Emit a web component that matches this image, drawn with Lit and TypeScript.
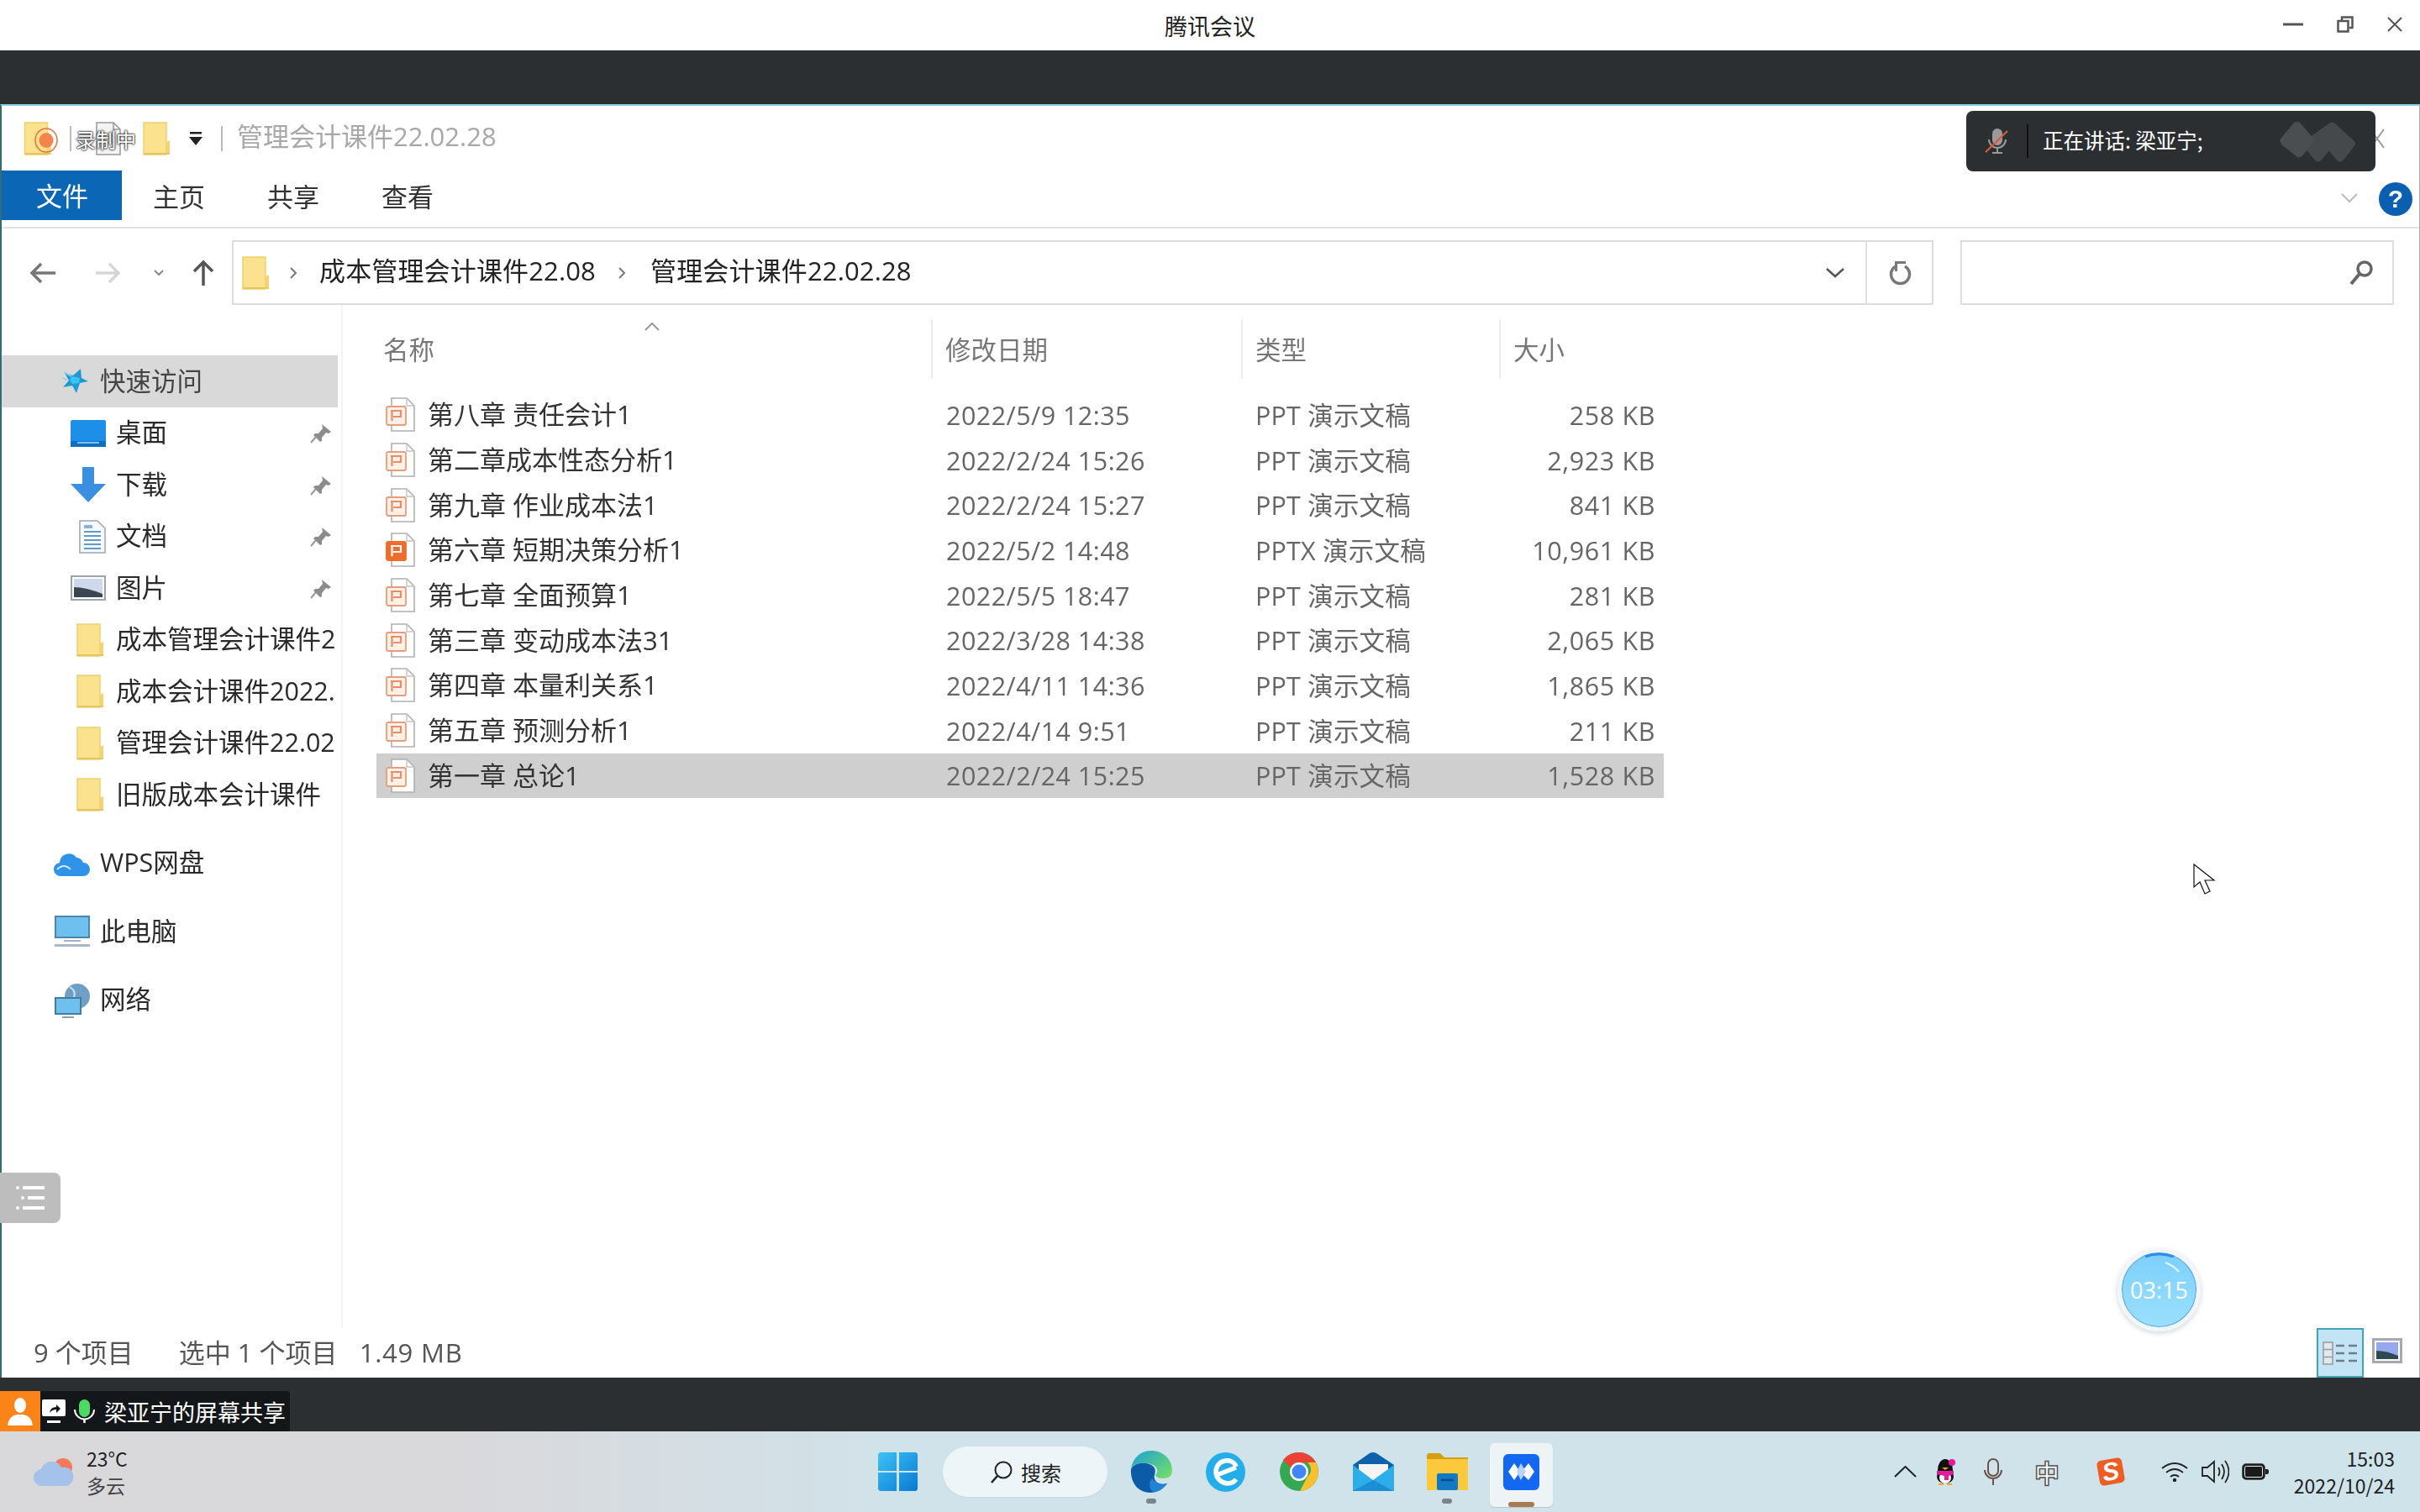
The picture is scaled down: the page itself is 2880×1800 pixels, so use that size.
import { LitElement, html, css, svg, TemplateResult } from 'lit';
import { customElement } from 'lit/decorators.js';

interface FileRow {
  name: string;
  date: string;
  type: string;
  size: string;
  solid?: boolean;
  selected?: boolean;
}

const FILES: FileRow[] = [
  { name: '第八章 责任会计1', date: '2022/5/9 12:35', type: 'PPT 演示文稿', size: '258 KB' },
  { name: '第二章成本性态分析1', date: '2022/2/24 15:26', type: 'PPT 演示文稿', size: '2,923 KB' },
  { name: '第九章 作业成本法1', date: '2022/2/24 15:27', type: 'PPT 演示文稿', size: '841 KB' },
  { name: '第六章 短期决策分析1', date: '2022/5/2 14:48', type: 'PPTX 演示文稿', size: '10,961 KB', solid: true },
  { name: '第七章 全面预算1', date: '2022/5/5 18:47', type: 'PPT 演示文稿', size: '281 KB' },
  { name: '第三章 变动成本法31', date: '2022/3/28 14:38', type: 'PPT 演示文稿', size: '2,065 KB' },
  { name: '第四章 本量利关系1', date: '2022/4/11 14:36', type: 'PPT 演示文稿', size: '1,865 KB' },
  { name: '第五章 预测分析1', date: '2022/4/14 9:51', type: 'PPT 演示文稿', size: '211 KB' },
  { name: '第一章 总论1', date: '2022/2/24 15:25', type: 'PPT 演示文稿', size: '1,528 KB', selected: true },
];

const folderIcon = (w = 33, h = 40): TemplateResult => html`
  <svg width=${w} height=${h} viewBox="0 0 33 40">
    <path d="M1 1h27v38H1z" fill="#fbe28e" stroke="#efd070" stroke-width="1.5" />
    <path d="M28 24l4-2v17h-4z" fill="#f4d470" />
    <path d="M1 37h31v2H1z" fill="#e6c560" />
  </svg>
`;

const pinIcon = html`
  <svg width="28" height="26" viewBox="0 0 28 26">
    <path d="M15 2l11 9-3 2-3-1-5 6 0 4-2 1-8-8 2-2 4 0 5-6z" fill="#8c8c8c" />
    <path d="M8 17l-6 7" stroke="#999" stroke-width="2" />
  </svg>
`;

const pptIcon = (solid = false): TemplateResult => html`
  <svg width="36" height="41" viewBox="0 0 36 41">
    <path d="M7 1h18l9 9v30H7z" fill="#fff" stroke="#b0b0b0" stroke-width="1.6" />
    <path d="M25 1v9h9" fill="none" stroke="#c4c4c4" stroke-width="1.4" />
    <rect x="1" y="11" width="23" height="22" rx="2" fill=${solid ? '#ee6c2c' : '#fdf0e6'} stroke=${solid ? '#ee6c2c' : '#e99c7c'} stroke-width="1.8" />
    <path d="M6 16h12v7H9M7.500 16v12" fill="none" stroke=${solid ? '#fff' : '#e58e68'} stroke-width="2.200" />
  </svg>
`;

const chevron = (w = 10, h = 16, color = '#777'): TemplateResult => html`
  <svg width=${w} height=${h} viewBox="0 0 10 16"><path d="M2 2l6 6-6 6" fill="none" stroke=${color} stroke-width="2" /></svg>
`;

const meetLogo = (fill: string): TemplateResult => svg`
  <path d="M20 1q3-2 6 0l15 20-12 17q-3 4-6 2L8 26q-3-4-1-7z" fill=${fill} />
  <path d="M55 2q3-3 6 0l19 20q2 3 0 6L69 44q-3 3-6 0l-8-11-8 11q-3 3-6 0L30 28q-2-3 0-6z" fill=${fill} opacity=".85" />
`;

@customElement('app-root')
export class AppRoot extends LitElement {
  static styles = css`
    :host {
      display: block;
      position: relative;
      width: 2880px;
      height: 1800px;
      overflow: hidden;
      background: #fff;
      font-family: "Open Sans", "Noto Sans CJK SC", sans-serif;
      color: #333;
    }
    svg { display: block; flex: none; }

    .titlebar {
      height: 60px;
      background: #fff;
      display: flex;
      align-items: center;
      justify-content: center;
      position: relative;
      font-size: 27px;
      color: #222;
    }
    .win-btns {
      position: absolute;
      right: 21px;
      top: 19px;
      display: flex;
      align-items: center;
      gap: 40px;
    }
    .stripe { height: 64px; background: #2c2f32; }
    .stripe.low { height: 64px; position: relative; }

    .window {
      height: 1516px;
      box-sizing: border-box;
      background: #fff;
      border-top: 2px solid #86d2dc;
      border-left: 2px solid #2f6e78;
      border-right: 1px solid #aaa;
      display: flex;
      flex-direction: column;
      font-size: 30.5px;
      line-height: 40px;
      filter: blur(0.55px);
    }

    .qat {
      height: 77px;
      flex: none;
      display: flex;
      align-items: center;
      padding-left: 26px;
      box-sizing: border-box;
    }
    .qat .sep { width: 2px; height: 30px; background: #bbb; margin-left: 21px; }
    .qat .doc { margin-left: 29px; }
    .qat .f2 { margin-left: 26px; }
    .qat .arrow { margin-left: 21px; }
    .qat .title { margin-left: 17px; color: #a8a8a8; font-size: 31px; padding-bottom: 5px; }
    .qat .close { margin-left: auto; margin-right: 40px; }

    .tabs {
      height: 69px;
      flex: none;
      box-sizing: border-box;
      border-bottom: 2px solid #e2e2e2;
      display: flex;
      align-items: flex-start;
    }
    .tab { height: 59px; padding: 2px 37px 0; box-sizing: border-box; display: flex; align-items: center; color: #333; font-size: 31px; }
    .tab.file { background: #0b66b6; color: #fff; padding: 0 40px 0 41px; }
    .tabs .more { margin-left: auto; margin-right: 24px; margin-top: 26px; }
    .help {
      width: 40px;
      height: 40px;
      margin: 14px 8px 0 0;
      border-radius: 50%;
      background: #0b5fb0;
      color: #fff;
      font: bold 30px/40px "Liberation Sans", sans-serif;
      text-align: center;
    }

    .nav {
      flex: none;
      display: flex;
      align-items: center;
      padding: 14px 30px 0 33px;
      height: 91px;
      box-sizing: border-box;
    }
    .nav .fwd { margin-left: 46px; }
    .nav .drop { margin-left: 40px; }
    .nav .up { margin-left: 33px; }
    .addr {
      margin-left: 20px;
      width: 2025px;
      height: 77px;
      box-sizing: border-box;
      border: 2px solid #dcdcdc;
      display: flex;
      align-items: center;
      padding-left: 10px;
      color: #222;
      font-size: 31px;
    }
    .addr .crumb1 { margin-left: 23px; }
    .addr .t1 { margin-left: 26px; padding-bottom: 5px; letter-spacing: .15px; }
    .addr .crumb2 { margin-left: 26px; }
    .addr .t2 { margin-left: 29px; padding-bottom: 5px; letter-spacing: .15px; }
    .addr .dd { margin-left: auto; }
    .addr .refresh {
      margin-left: 24px;
      width: 77px;
      height: 75px;
      border-left: 2px solid #e0e0e0;
      display: flex;
      align-items: center;
      justify-content: center;
    }
    .search {
      margin-left: 32px;
      width: 516px;
      height: 77px;
      box-sizing: border-box;
      border: 2px solid #dcdcdc;
      display: flex;
      align-items: center;
      justify-content: flex-end;
      padding-right: 22px;
    }

    .content { flex: 1; display: flex; min-height: 0; }
    .side {
      width: 406px;
      flex: none;
      box-sizing: border-box;
      padding-top: 60px;
      border-right: 2px solid #f3f3f3;
    }
    .side-row {
      height: 61.5px;
      width: 400px;
      display: flex;
      align-items: center;
      position: relative;
      white-space: nowrap;
      color: #2a2a2a;
    }
    .side-row span { padding-bottom: 3px; }
    .side-row.quick { height: 62px; background: #d9d9d9; color: #444; }
    .side-row .ico { width: 136px; flex: none; display: flex; justify-content: flex-end; padding-right: 12px; box-sizing: border-box; }
    .side-row .ico.fold { padding-right: 14px; }
    .side-row .pin { position: absolute; right: 6px; top: 18px; }
    .side-row.top { height: 81.5px; }
    .side-row.top .ico, .side-row.quick .ico { width: 117px; }
    .side-row.quick .ico { padding-right: 14px; }
    .side-gap { height: 10px; }

    .list { flex: 1; padding-left: 40px; padding-top: 17px; }
    .cols {
      width: 1532px;
      display: grid;
      grid-template-columns: 660px 369px 307px 196px;
      align-items: center;
    }
    .head { height: 71px; color: #777; position: relative; align-items: stretch; }
    .head > div {
      padding-left: 15px;
      display: flex;
      align-items: center;
      border-left: 2px solid #ededed;
    }
    .head > div:first-child { border-left: none; padding-left: 8px; }
    .sort { position: absolute; left: 318px; top: 3px; }
    .rows { margin-top: 16px; }
    .row { height: 53.7px; color: #666; white-space: nowrap; }
    .row.sel { background: #cfcfcf; }
    .row .name { display: flex; align-items: center; gap: 14px; padding-left: 11px; color: #333; font-size: 31px; }
    .row .name span { padding-bottom: 1px; }
    .row .date { padding-left: 18px; letter-spacing: .45px; }
    .row .type { padding-left: 17px; letter-spacing: .2px; }
    .row .size { text-align: right; padding-right: 10px; letter-spacing: .6px; }

    .status {
      height: 60px;
      flex: none;
      display: flex;
      align-items: center;
      padding-left: 38px;
      color: #555;
      position: relative;
      font-size: 31px;
    }
    .status .sel { margin-left: 54px; }
    .status .bytes { margin-left: 26px; letter-spacing: .8px; }
    .views { position: absolute; right: 20px; bottom: 0; display: flex; align-items: flex-start; gap: 10px; }
    .view-d {
      width: 56px;
      height: 59px;
      box-sizing: border-box;
      background: #c2e4f4;
      border: 2px solid #3ea6b6;
      display: flex;
      align-items: center;
      justify-content: center;
    }
    .view-t { margin-top: 12px; }

    .share {
      position: absolute;
      left: 0;
      top: 16px;
      height: 48px;
      width: 345px;
      background: #14171a;
      border-radius: 0 4px 0 0;
      display: flex;
      align-items: center;
      color: #fff;
      font-size: 27px;
      font-family: "Noto Sans CJK SC", sans-serif;
    }
    .share .who { width: 48px; height: 48px; background: #fb8419; display: flex; align-items: center; justify-content: center; }
    .share .scr { margin-left: 2px; }
    .share .mic { margin-left: 10px; }
    .share .label { margin-left: 11px; white-space: nowrap; }

    .taskbar {
      height: 96px;
      display: flex;
      align-items: center;
      background: linear-gradient(90deg, #d9d9dc 0, #d9d9dc 560px, #d0e3ea 1100px, #cfe3ea 100%);
      padding-right: 30px;
      color: #222;
      font-family: "Noto Sans CJK SC", sans-serif;
    }
    .weather { width: 1024px; flex: none; display: flex; align-items: center; padding-left: 40px; box-sizing: border-box; gap: 15px; }
    .weather .txt { font-size: 23px; line-height: 32px; }
    .weather .txt div:last-child { color: #444; }
    .cell { width: 88px; height: 96px; flex: none; display: flex; align-items: center; justify-content: center; position: relative; }
    .pill {
      width: 196px;
      height: 60px;
      margin: 0 8px 0 10px;
      flex: none;
      border-radius: 30px;
      background: #edf5f8;
      box-shadow: 0 1px 1px #c8d6dc;
      display: flex;
      align-items: center;
      gap: 10px;
      padding-left: 56px;
      box-sizing: border-box;
      font-size: 24px;
    }
    .dot { position: absolute; left: 38px; top: 80px; width: 12px; height: 6px; border-radius: 3px; background: #7b8489; }
    .tile {
      width: 75px;
      height: 76px;
      position: relative;
      background: #eef3f6;
      border-radius: 6px;
      box-shadow: 0 1px 1px #b9c7cd;
      display: flex;
      align-items: center;
      justify-content: center;
      margin-top: 8px;
      padding-bottom: 8px;
      box-sizing: border-box;
    }
    .tile .bar { position: absolute; left: 22px; bottom: 0; width: 31px; height: 6px; border-radius: 3px; background: #a87a52; }
    .tray {
      margin-left: auto;
      display: grid;
      grid-template-columns: 48px 48px 66px 62px 90px 62px 34px 62px 135px;
      align-items: center;
      justify-items: center;
    }
    .ime {
      font-size: 30px;
      line-height: 32px;
      color: #fff;
      -webkit-text-stroke: 1.5px #555;
      font-weight: 700;
    }
    .sogou {
      width: 30px;
      height: 30px;
      background: #ee5d22;
      border-radius: 5px;
      transform: rotate(-10deg);
      color: #fff;
      font: italic bold 30px/30px "Liberation Sans", sans-serif;
      text-align: center;
    }
    .clock { justify-self: end; text-align: right; font-size: 23px; line-height: 32px; }

    .rec { position: absolute; left: 41px; top: 152px; }
    .rec-label {
      position: absolute;
      left: 90px;
      top: 149px;
      color: #fff;
      font-size: 24px;
      line-height: 34px;
      font-family: "Noto Sans CJK SC", sans-serif;
      text-shadow: 0 0 2px #222, 0 0 2px #222, 0 0 3px #444;
    }
    .float-list {
      position: absolute;
      left: 0;
      top: 1396px;
      width: 72px;
      height: 60px;
      background: #bdbdbd;
      border-radius: 0 8px 8px 0;
      display: flex;
      align-items: center;
      justify-content: center;
    }
    .toast {
      position: absolute;
      left: 2340px;
      top: 132px;
      width: 487px;
      height: 72px;
      box-sizing: border-box;
      border-radius: 8px;
      background: #2c2f32;
      color: #fff;
      font-family: "Noto Sans CJK SC", sans-serif;
      font-size: 24.5px;
      display: flex;
      align-items: center;
      padding-left: 22px;
    }
    .toast .div { width: 2px; height: 40px; background: #111; margin-left: 22px; }
    .toast .msg { margin-left: 17px; white-space: nowrap; padding-bottom: 3px; }
    .toast .logo { position: absolute; left: 372px; top: 13px; }
    .cursor { position: absolute; left: 2610px; top: 1028px; }
    .timer {
      position: absolute;
      left: 2520px;
      top: 1486px;
      width: 99px;
      height: 99px;
      box-sizing: border-box;
      border: 5px solid #f2f6f8;
      border-radius: 50%;
      background: linear-gradient(180deg, #7dd0fb, #9be0fd);
      box-shadow: 0 2px 6px #ccd6da, inset 0 0 0 1px #4c9fe8;
      color: #fff;
      font-size: 27px;
      display: flex;
      align-items: center;
      justify-content: center;
    }
    .timer .shine { position: absolute; left: 0; top: 0; }
  `;

  private renderSideRow(label: string, icon: TemplateResult, pinned = false, cls = '', fold = false): TemplateResult {
    return html`
      <div class="side-row ${cls}">
        <div class="ico ${fold ? 'fold' : ''}">${icon}</div>
        <span>${label}</span>
        ${pinned ? html`<div class="pin">${pinIcon}</div>` : ''}
      </div>
    `;
  }

  private renderWindow(): TemplateResult {
    return html`
      <div class="window">
        <div class="qat">
          ${folderIcon(34, 40)}
          <div class="sep"></div>
          <svg class="doc" width="30" height="40" viewBox="0 0 30 40">
            <path d="M1 1h20l8 8v30H1z" fill="#f4f4f4" stroke="#999" stroke-width="1.5" />
            <path d="M21 1v8h8" fill="none" stroke="#999" stroke-width="1.5" />
          </svg>
          <div class="f2">${folderIcon(33, 42)}</div>
          <svg class="arrow" width="18" height="18" viewBox="0 0 18 18">
            <path d="M2 1h14v2.500H2zM1 7h16l-8 10z" fill="#222" />
          </svg>
          <div class="sep"></div>
          <span class="title">管理会计课件22.02.28</span>
          <svg class="close" width="20" height="26" viewBox="0 0 20 26"><path d="M2 2l16 22M18 2L2 24" stroke="#999" stroke-width="2" /></svg>
        </div>

        <div class="tabs">
          <div class="tab file">文件</div>
          <div class="tab">主页</div>
          <div class="tab">共享</div>
          <div class="tab">查看</div>
          <svg class="more" width="22" height="14" viewBox="0 0 22 14"><path d="M2 2l9 9 9-9" fill="none" stroke="#bbb" stroke-width="2" /></svg>
          <div class="help">?</div>
        </div>

        <div class="nav">
          <svg width="32" height="26" viewBox="0 0 32 26"><path d="M31 13H4M14 2L3 13l11 11" fill="none" stroke="#777" stroke-width="3.500" /></svg>
          <svg class="fwd" width="30" height="26" viewBox="0 0 30 26"><path d="M1 13h26M17 2l11 11-11 11" fill="none" stroke="#d6d6d6" stroke-width="3.500" /></svg>
          <svg class="drop" width="12" height="8" viewBox="0 0 12 8"><path d="M1 1l5 5 5-5" fill="none" stroke="#888" stroke-width="2" /></svg>
          <svg class="up" width="28" height="32" viewBox="0 0 28 32"><path d="M14 31V3M3 14L14 3l11 11" fill="none" stroke="#555" stroke-width="3.500" /></svg>
          <div class="addr">
            ${folderIcon(33, 40)}
            <span class="crumb1">${chevron()}</span>
            <span class="t1">成本管理会计课件22.08</span>
            <span class="crumb2">${chevron()}</span>
            <span class="t2">管理会计课件22.02.28</span>
            <svg class="dd" width="24" height="14" viewBox="0 0 24 14"><path d="M2 2l10 9 10-9" fill="none" stroke="#555" stroke-width="2.500" /></svg>
            <div class="refresh">
              <svg width="28" height="30" viewBox="0 0 28 30">
                <path d="M9 7a11 11 0 1 0 11 0" fill="none" stroke="#777" stroke-width="3.500" />
                <path d="M8 1h13v3H11v9H8z" fill="#777" />
              </svg>
            </div>
          </div>
          <div class="search">
            <svg width="30" height="32" viewBox="0 0 30 32">
              <circle cx="19" cy="11" r="8" fill="none" stroke="#666" stroke-width="3.500" />
              <path d="M13 17L3 29" stroke="#666" stroke-width="4" />
            </svg>
          </div>
        </div>

        <div class="content">
          <div class="side">
            ${this.renderSideRow('快速访问', html`
              <svg width="32" height="32" viewBox="0 0 32 32">
                <path d="M23 1l1 11 8 4-10 2-4 12-5-9-11 2 7-8-5-9 10 3z" fill="#1c9ad6" />
                <path d="M13 10l9 2-1 6-8 1-3-5z" fill="#3cc4f0" />
                <path d="M3 5l9 5M1 12l6 2" stroke="#8fcfe8" stroke-width="1.500" />
              </svg>
            `, false, 'quick')}
            ${this.renderSideRow('桌面', html`
              <svg width="42" height="32" viewBox="0 0 42 32">
                <rect width="42" height="32" rx="2" fill="#1e8fe8" />
                <path d="M0 25h42v7H0z" fill="#0d6fbf" />
                <path d="M8 26h26v2H8z" fill="#7cc4f4" />
              </svg>
            `, true)}
            ${this.renderSideRow('下载', html`
              <svg width="42" height="42" viewBox="0 0 42 42"><path d="M14 0h14v20h14L21 42 0 20h14z" fill="#3a8fe0" /></svg>
            `, true)}
            ${this.renderSideRow('文档', html`
              <svg class="docs" width="32" height="40" viewBox="0 0 32 40">
                <path d="M1 1h21l9 9v29H1z" fill="#f6f9fc" stroke="#9aa7b4" stroke-width="1.500" />
                <path d="M6 14h20M6 19h20M6 24h20M6 29h20M6 34h20" stroke="#5f9ac8" stroke-width="1.800" />
                <path d="M6 6h10v4H6z" fill="#8bb4d4" />
              </svg>
            `, true)}
            ${this.renderSideRow('图片', html`
              <svg width="42" height="30" viewBox="0 0 42 30">
                <rect x="1" y="1" width="40" height="28" fill="#fff" stroke="#9aa4ae" stroke-width="2" />
                <rect x="4" y="4" width="34" height="22" fill="#cfd8ea" />
                <path d="M4 14q14 0 34 8v4H4z" fill="#3c4650" />
              </svg>
            `, true)}
            ${this.renderSideRow('成本管理会计课件2', folderIcon(), false, '', true)}
            ${this.renderSideRow('成本会计课件2022.', folderIcon(), false, '', true)}
            ${this.renderSideRow('管理会计课件22.02', folderIcon(), false, '', true)}
            ${this.renderSideRow('旧版成本会计课件', folderIcon(), false, '', true)}
            <div class="side-gap"></div>
            ${this.renderSideRow('WPS网盘', html`
              <svg width="43" height="30" viewBox="0 0 43 30">
                <path d="M9 30a8 8 0 0 1-2-16 11 11 0 0 1 20-6 9 9 0 0 1 8 6 8 8 0 0 1 0 16z" fill="#2f93ea" />
                <path d="M4 22q8-8 16 0" fill="none" stroke="#cfe8fb" stroke-width="2" />
              </svg>
            `, false, 'top')}
            ${this.renderSideRow('此电脑', html`
              <svg width="42" height="38" viewBox="0 0 42 38">
                <rect x="1" y="1" width="40" height="25" fill="#6ec0ee" stroke="#4b86ad" stroke-width="2" />
                <path d="M11 29h20v2H11z" fill="#9fb3c0" />
                <path d="M0 34h42v3H0z" fill="#a9b9c4" />
              </svg>
            `, false, 'top')}
            ${this.renderSideRow('网络', html`
              <svg width="42" height="42" viewBox="0 0 42 42">
                <circle cx="27" cy="16" r="15" fill="#6f9fc4" />
                <path d="M18 5q9 5 4 14" fill="none" stroke="#cde2f0" stroke-width="2" />
                <rect x="1" y="18" width="30" height="19" fill="#6ec0ee" stroke="#3f7da3" stroke-width="2" />
                <path d="M9 40h14v2H9z" fill="#8aa0ae" />
              </svg>
            `, false, 'top')}
          </div>

          <div class="list">
            <div class="cols head">
              <div>名称</div>
              <div>修改日期</div>
              <div>类型</div>
              <div>大小</div>
              <svg class="sort" width="20" height="12" viewBox="0 0 20 12"><path d="M2 10l8-8 8 8" fill="none" stroke="#999" stroke-width="2" /></svg>
            </div>
            <div class="rows">
              ${FILES.map((f) => html`
                <div class="cols row ${f.selected ? 'sel' : ''}">
                  <div class="name">${pptIcon(f.solid)}<span>${f.name}</span></div>
                  <div class="date">${f.date}</div>
                  <div class="type">${f.type}</div>
                  <div class="size">${f.size}</div>
                </div>
              `)}
            </div>
          </div>
        </div>

        <div class="status">
          <span>9 个项目</span>
          <span class="sel">选中 1 个项目</span>
          <span class="bytes">1.49 MB</span>
          <div class="views">
            <div class="view-d">
              <svg width="42" height="28" viewBox="0 0 42 28">
                <rect x="1" y="1" width="11" height="26" fill="#dfeaf0" stroke="#999" stroke-width="1.500" />
                <path d="M1 9.500h11M1 18.500h11" stroke="#999" stroke-width="1.500" />
                <path d="M16 5h10M31 5h10M16 14h10M31 14h10M16 23h10M31 23h10" stroke="#6b7f8a" stroke-width="2.500" />
              </svg>
            </div>
            <svg class="view-t" width="36" height="30" viewBox="0 0 36 30">
              <rect x="1.500" y="1.500" width="33" height="27" fill="#fff" stroke="#a8a8b0" stroke-width="3" />
              <rect x="5" y="5" width="26" height="20" fill="#96a8ee" />
              <path d="M5 15q12 0 26 6v4H5z" fill="#2c4a50" />
            </svg>
          </div>
        </div>
      </div>
    `;
  }

  private renderTaskbar(): TemplateResult {
    return html`
      <div class="taskbar">
        <div class="weather">
          <svg width="48" height="34" viewBox="0 0 48 34">
            <circle cx="35" cy="12" r="11" fill="#f4795c" />
            <path d="M11 34a10 10 0 0 1-2-20 13 13 0 0 1 24-2 10 10 0 0 1 6 22z" fill="#a4c2ea" />
          </svg>
          <div class="txt"><div>23°C</div><div>多云</div></div>
        </div>

        <div class="cell">
          <svg width="47" height="46" viewBox="0 0 47 46">
            <defs><linearGradient id="w" x1="0" y1="0" x2="1" y2="1"><stop offset="0" stop-color="#3cc4f4" /><stop offset="1" stop-color="#0a78d4" /></linearGradient></defs>
            <path d="M2 0h20v22H0V2zM25 0h20l2 2v20H25zM0 24h22v22H2l-2-2zM25 24h22v20l-2 2H25z" fill="url(#w)" />
          </svg>
        </div>
        <div class="pill">
          <svg width="27" height="27" viewBox="0 0 27 27">
            <circle cx="16" cy="11" r="9.500" fill="none" stroke="#222" stroke-width="2" />
            <path d="M9 18L2 26" stroke="#222" stroke-width="2.500" />
          </svg>
          <span>搜索</span>
        </div>

        <div class="cell">
          <svg width="50" height="50" viewBox="0 0 50 50">
            <defs><linearGradient id="e" x1="0" y1="0" x2="1" y2=".8"><stop offset="0" stop-color="#1b9fd8" /><stop offset="1" stop-color="#6fdc6c" /></linearGradient></defs>
            <path d="M1 22C3 8 13 0 25 0c14 0 25 10 25 24 0 6-4 9-10 9-5 0-9-1-10-4 3-2 4-9-3-12C17 13 4 14 1 22z" fill="url(#e)" />
            <path d="M1 22c4-8 16-9 24-5 6 3 5 9 4 12-2 6 4 13 15 10-5 7-12 11-20 11C8 50 0 36 1 22z" fill="#0c5ba8" />
            <path d="M26 33c5 7 13 8 18 6-5 7-11 10-17 10-5-5-5-12-1-16z" fill="#2183d4" />
          </svg>
          <div class="dot"></div>
        </div>
        <div class="cell">
          <svg width="47" height="47" viewBox="0 0 47 47">
            <circle cx="23.500" cy="23.500" r="23.500" fill="#23aeea" />
            <path d="M36 17c-2-6-8-8-13-7-7 1-11 7-11 13 0 8 7 14 14 14 5 0 8-2 10-5" fill="none" stroke="#fff" stroke-width="5.500" />
            <path d="M13 27l23-9" fill="none" stroke="#fff" stroke-width="5.500" />
          </svg>
        </div>
        <div class="cell">
          <svg width="46" height="46" viewBox="0 0 46 46">
            <circle cx="23" cy="23" r="23" fill="#34a853" />
            <path d="M23 0a23 23 0 0 1 20 12H23a11 11 0 0 0-10 6L4 9A23 23 0 0 1 23 0z" fill="#ea4335" />
            <path d="M43 12a23 23 0 0 1-19 34l9-17a11 11 0 0 0 0-17z" fill="#fbc02d" />
            <circle cx="23" cy="23" r="11" fill="#fff" />
            <circle cx="23" cy="23" r="8.500" fill="#4285f4" />
          </svg>
        </div>
        <div class="cell">
          <svg width="49" height="46" viewBox="0 0 49 46">
            <path d="M0 15L20 1q4-2 8 0l21 14v6H0z" fill="#0d62ab" />
            <path d="M7 14h35v16L24 40 7 30z" fill="#f4f4f4" />
            <path d="M0 15l24 18 25-18v31H0z" fill="#2eaee8" />
            <path d="M24 33l25 13H0z" fill="#1b8fd6" />
          </svg>
        </div>
        <div class="cell">
          <svg width="49" height="44" viewBox="0 0 49 44">
            <path d="M0 3q0-3 3-3h13l5 5h28v10H0z" fill="#d4a012" />
            <path d="M0 7h49v37H0z" fill="#fcc83c" />
            <rect x="12" y="24" width="25" height="20" rx="2" fill="#1379c4" />
            <path d="M17 32h15" stroke="#0b4f8a" stroke-width="2.500" />
          </svg>
          <div class="dot"></div>
        </div>
        <div class="cell">
          <div class="tile">
            <svg width="43" height="43" viewBox="0 0 43 43">
              <rect width="43" height="43" rx="6" fill="#1268f0" />
              <path d="M13 11l7 10-7 10-7-10zM30 11l7 10-7 10-7-7-1-3z" fill="#fff" />
              <path d="M21 11l6 10-6 10-5-10z" fill="#b8d4fb" />
            </svg>
            <div class="bar"></div>
          </div>
        </div>

        <div class="tray">
          <svg width="27" height="14" viewBox="0 0 27 14"><path d="M1 13L13.500 1 26 13" fill="none" stroke="#222" stroke-width="2" /></svg>
          <svg width="28" height="32" viewBox="0 0 28 32">
            <ellipse cx="14" cy="14" rx="9" ry="13" fill="#111" />
            <ellipse cx="14" cy="22" rx="10" ry="8" fill="#111" />
            <ellipse cx="14" cy="23" rx="7" ry="7" fill="#fff" />
            <path d="M4 15h20v4l-6 2v5h-5v-5l-9-2z" fill="#e6199a" />
            <path d="M10 11h8l-4 3z" fill="#f7a81c" />
            <circle cx="22" cy="5" r="4" fill="#e6199a" />
            <path d="M6 30h6v2H6zM16 30h6v2h-6z" fill="#f7a81c" />
          </svg>
          <svg width="22" height="32" viewBox="0 0 22 32">
            <rect x="5" y="1" width="12" height="20" rx="6" fill="none" stroke="#6c5448" stroke-width="2" />
            <path d="M1 14a10 10 0 0 0 20 0M11 24v8" fill="none" stroke="#6c5448" stroke-width="2" />
          </svg>
          <span class="ime">中</span>
          <div class="sogou">S</div>
          <svg width="32" height="24" viewBox="0 0 32 24">
            <path d="M1 8q15-12 30 0M6 13q10-8 20 0M11 18q5-4 10 0" fill="none" stroke="#222" stroke-width="2" />
            <circle cx="16" cy="22" r="2.200" fill="#222" />
          </svg>
          <svg width="33" height="28" viewBox="0 0 33 28">
            <path d="M1 9h6l8-7v24l-8-7H1z" fill="none" stroke="#222" stroke-width="1.800" />
            <path d="M20 9q3 5 0 10M24 5q6 9 0 18M28 1q9 13 0 26" fill="none" stroke="#222" stroke-width="1.800" />
          </svg>
          <svg width="32" height="20" viewBox="0 0 32 20">
            <rect x="1" y="1" width="26" height="18" rx="4" fill="#222" stroke="#222" stroke-width="1.500" />
            <rect x="3.500" y="3.500" width="21" height="13" rx="2" fill="#1a1a1a" stroke="#e6eef2" stroke-width="1" />
            <path d="M28 7h2q2 0 2 2v2q0 2-2 2h-2z" fill="#222" />
          </svg>
          <div class="clock"><div>15:03</div><div>2022/10/24</div></div>
        </div>
      </div>
    `;
  }

  render(): TemplateResult {
    return html`
      <div class="titlebar">
        <span>腾讯会议</span>
        <div class="win-btns">
          <svg width="24" height="4" viewBox="0 0 24 4"><path d="M0 2h24" stroke="#555" stroke-width="3" /></svg>
          <svg width="20" height="20" viewBox="0 0 20 20"><path d="M1.500 6h12v12.500h-12zM6 5V1.500h12.500V14H15" fill="none" stroke="#555" stroke-width="2.500" /></svg>
          <svg width="18" height="18" viewBox="0 0 18 18"><path d="M1 1l16 16M17 1L1 17" stroke="#555" stroke-width="2" /></svg>
        </div>
      </div>
      <div class="stripe"></div>
      ${this.renderWindow()}
      <div class="stripe low">
        <div class="share">
          <div class="who">
            <svg width="30" height="33" viewBox="0 0 30 33">
              <ellipse cx="15" cy="9" rx="7" ry="9" fill="#fff" />
              <path d="M0 33q1-11 11-13h8q10 2 11 13z" fill="#fff" />
            </svg>
          </div>
          <svg class="scr" width="28" height="28" viewBox="0 0 28 28">
            <rect width="28" height="20" rx="2" fill="#fff" />
            <path d="M9 16q1-7 8-7V6l5 5-5 5v-4q-5 0-8 4z" fill="#14171a" />
            <path d="M6 25h16v3H6z" fill="#fff" />
          </svg>
          <svg class="mic" width="25" height="28" viewBox="0 0 25 28">
            <rect x="6" y="0" width="13" height="21" rx="6.500" fill="#4cd964" />
            <path d="M1 12a11.500 11.500 0 0 0 23 0" fill="none" stroke="#fff" stroke-width="2" />
            <path d="M12.500 23v5" stroke="#fff" stroke-width="2.500" />
          </svg>
          <span class="label">梁亚宁的屏幕共享</span>
        </div>
      </div>
      ${this.renderTaskbar()}

      <svg class="rec" width="28" height="30" viewBox="0 0 28 30">
        <ellipse cx="14" cy="15" rx="13" ry="14" fill="none" stroke="#e8703c" stroke-width="1.500" />
        <ellipse cx="14" cy="15" rx="8.500" ry="9" fill="#f4844c" />
      </svg>
      <div class="rec-label">录制中</div>

      <div class="float-list">
        <svg width="34" height="30" viewBox="0 0 34 30">
          <path d="M8 3h26M14 15h20M8 27h26" stroke="#fff" stroke-width="4" />
          <circle cx="2" cy="3" r="2" fill="#fff" /><circle cx="8" cy="15" r="2" fill="#fff" /><circle cx="2" cy="27" r="2" fill="#fff" />
        </svg>
      </div>

      <div class="toast">
        <svg width="28" height="30" viewBox="0 0 28 30">
          <rect x="9" y="0" width="12" height="20" rx="6" fill="#9a9a9a" />
          <path d="M5 13a10 10 0 0 0 20 0M15 23v5M9 29h12" fill="none" stroke="#9a9a9a" stroke-width="2" />
          <path d="M1 28L27 3" stroke="#d9583c" stroke-width="2.200" />
        </svg>
        <div class="div"></div>
        <span class="msg">正在讲话: 梁亚宁;</span>
        <svg class="logo" width="92" height="48" viewBox="5 0 77 46" preserveAspectRatio="none">${meetLogo('#4b4e51')}</svg>
      </div>

      <svg class="cursor" width="27" height="40" viewBox="0 0 27 40">
        <path d="M1 1v27l7-6 6 14 6-3-6-13h11z" fill="#fff" stroke="#111" stroke-width="1.200" />
      </svg>

      <div class="timer">
        <svg class="shine" width="89" height="89" viewBox="0 0 89 89">
          <path d="M28 5q16-6 34 0" fill="none" stroke="#2f8fe8" stroke-width="3" />
          <path d="M52 12q10 4 16 11" fill="none" stroke="#e6f6ff" stroke-width="2" />
        </svg>
        03:15
      </div>
    `;
  }
}
